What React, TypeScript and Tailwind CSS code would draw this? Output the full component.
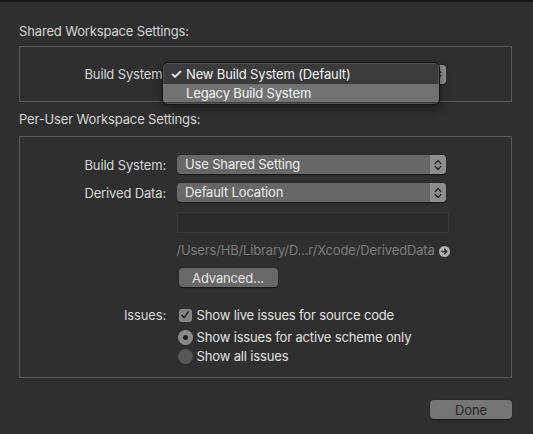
import React from "react";

function Stepper() {
  return (
    <span className="flex h-full w-[16px] items-center justify-center rounded-r-[4px] bg-[#8e8e8e]">
      <svg width="8" height="12" viewBox="0 0 8 12" fill="none" stroke="#2a2a2a" strokeWidth="1.4" strokeLinecap="round" strokeLinejoin="round">
        <path d="M1.2 4.4 L4 1.6 L6.8 4.4" />
        <path d="M1.2 7.6 L4 10.4 L6.8 7.6" />
      </svg>
    </span>
  );
}

function Popup({ value, children }: { value: string; children?: React.ReactNode }) {
  return (
    <div className="relative flex h-[19px] w-[269px] items-center rounded-[4px] bg-[#676767] shadow-[0_0.5px_1px_rgba(0,0,0,0.5)]">
      <span className="flex-1 pl-[8px] leading-none text-[#ececec]">{value}</span>
      <Stepper />
      {children}
    </div>
  );
}

function Label({ children }: { children: React.ReactNode }) {
  return <div className="w-[146px] shrink-0 text-right text-[#d8d8d8]">{children}</div>;
}

function BuildMenu() {
  return (
    <div className="absolute left-[-15px] top-[-3px] z-10 w-[278px] overflow-hidden rounded-[6px] border border-[#151515] bg-[#3b3b3b] py-[2px] shadow-[0_4px_10px_rgba(0,0,0,0.45),inset_0_0_0_1px_rgba(255,255,255,0.12)]">
      <div className="flex h-[19px] items-center text-[#f2f2f2]">
        <span className="w-[23px] pl-[7px] text-[14px] font-semibold">✓</span>
        <span>New Build System (Default)</span>
      </div>
      <div className="flex h-[18px] items-center bg-[#727272] text-[#f5f5f5]">
        <span className="w-[23px]" />
        <span>Legacy Build System</span>
      </div>
    </div>
  );
}

export default function App() {
  return (
    <div className="h-[434px] w-[533px] overflow-hidden border-t-2 border-[#141414] bg-[#2f2f2f] pl-[19px] pr-[21px] pt-[21px] font-['Inter','Liberation_Sans',sans-serif] text-[13px] leading-[16px] tracking-[-0.15px] text-[#dcdcdc] antialiased">
      <div className="text-[#d6d6d6]">Shared Workspace Settings:</div>

      <div className="mt-[7px] flex h-[56px] items-center border border-[#595959]">
        <Label>Build System:</Label>
        <div className="ml-[11px]">
          <Popup value="New Build System (Default)">
            <BuildMenu />
          </Popup>
        </div>
      </div>

      <div className="mt-[9px] text-[#d6d6d6]">Per-User Workspace Settings:</div>

      <div className="mt-[9px] border border-[#595959] pb-[13px] pt-[18px]">
        <div className="flex items-center">
          <Label>Build System:</Label>
          <div className="ml-[11px]">
            <Popup value="Use Shared Setting" />
          </div>
        </div>
        <div className="mt-[9px] flex items-center">
          <Label>Derived Data:</Label>
          <div className="ml-[11px]">
            <Popup value="Default Location" />
          </div>
        </div>

        <div className="ml-[156.5px] mt-[10px] h-[21px] w-[272px] border border-[#3a3a3a] bg-[#2c2c2c]" />

        <div className="ml-[156.5px] mt-[9px] flex items-center gap-[4px]">
          <span className="text-[#7c7c7c]">/Users/HB/Library/D...r/Xcode/DerivedData</span>
          <svg width="11" height="11" viewBox="0 0 12 12" className="mt-[2px]">
            <circle cx="6" cy="6" r="6" fill="#b3b3b3" />
            <path d="M3 6 H8.5 M6.2 3.6 L8.6 6 L6.2 8.4" stroke="#2a2a2a" strokeWidth="1.5" fill="none" strokeLinecap="round" strokeLinejoin="round" />
          </svg>
        </div>

        <button className="ml-[158.5px] mt-[10px] flex h-[19px] w-[99px] items-center justify-center rounded-[4px] bg-[#686868] text-[#e6e6e6] shadow-[0_0.5px_1px_rgba(0,0,0,0.5)]">
          Advanced...
        </button>

        <div className="mt-[20px] flex items-center">
          <Label>Issues:</Label>
          <div className="ml-[12.5px] flex items-center">
            <span className="flex h-[13px] w-[13px] items-center justify-center rounded-[3px] bg-[#858585]">
              <svg width="10" height="10" viewBox="0 0 10 10" fill="none" stroke="#1e1e1e" strokeWidth="1.5" strokeLinecap="round" strokeLinejoin="round">
                <path d="M2 5.3 L4.2 7.8 L8.2 1.8" />
              </svg>
            </span>
            <span className="ml-[5px] text-[#e2e2e2]">Show live issues for source code</span>
          </div>
        </div>

        <div className="ml-[157.5px] mt-[6px] flex items-center">
          <span className="flex h-[15px] w-[15px] items-center justify-center rounded-full bg-[#8a8a8a]">
            <span className="h-[5px] w-[5px] rounded-full bg-[#1e1e1e]" />
          </span>
          <span className="ml-[4px] text-[#e2e2e2]">Show issues for active scheme only</span>
        </div>

        <div className="ml-[157.5px] mt-[3px] flex items-center">
          <span className="h-[15px] w-[15px] rounded-full bg-[#565656]" />
          <span className="ml-[4px] text-[#e2e2e2]">Show all issues</span>
        </div>
      </div>

      <div className="mt-[22px] flex justify-end">
        <button className="flex h-[19px] w-[82px] items-center justify-center rounded-[4px] bg-[#757575] text-[#262626] shadow-[0_0.5px_1px_rgba(0,0,0,0.5)]">
          Done
        </button>
      </div>
    </div>
  );
}
